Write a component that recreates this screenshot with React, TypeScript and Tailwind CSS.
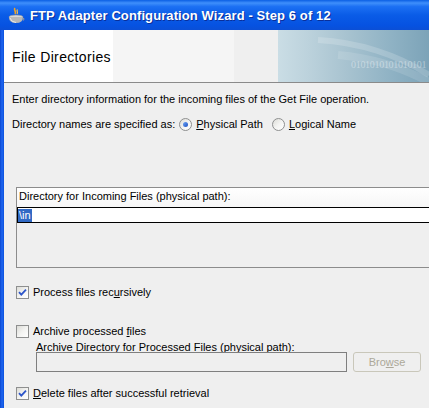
import React from "react";

const ui = { fontFamily: '"Liberation Sans", Arial, sans-serif' };

function JavaCup() {
  return (
    <svg width="18" height="18" viewBox="0 0 18 18">
      <path d="M8 1 C6 3 10 4 8 7" stroke="#f5a623" strokeWidth="1.6" fill="none" />
      <path d="M10.5 2.5 C9 4 11.5 5 10 7" stroke="#f8c24a" strokeWidth="1.2" fill="none" />
      <ellipse cx="9" cy="10" rx="7" ry="2" fill="#d8d8d8" stroke="#9a9a9a" strokeWidth="0.6" />
      <path d="M2 10 Q2 16 9 16 Q16 16 16 10 Z" fill="#b8b8b8" />
      <path d="M3 11 Q4 15 9 15.5" stroke="#e8e8e8" strokeWidth="1" fill="none" />
      <path d="M15.5 11 Q18 11 16.5 13.5" stroke="#9a9a9a" strokeWidth="1" fill="none" />
    </svg>
  );
}

function Checkbox({ checked }: { checked: boolean }) {
  return (
    <span className="relative inline-block h-[13px] w-[13px] shrink-0 border border-[#8e8f8f] bg-gradient-to-br from-[#dcdcd7] via-[#f3f3f1] to-white">
      {checked && (
        <svg className="absolute left-[1px] top-[1px]" width="9" height="9" viewBox="0 0 9 9">
          <path d="M1 4.2 L3.3 6.6 L8 1.6" stroke="#2d55c9" strokeWidth="1.8" fill="none" />
        </svg>
      )}
    </span>
  );
}

function Radio({ checked }: { checked: boolean }) {
  return (
    <span className="relative inline-flex h-[13px] w-[13px] shrink-0 items-center justify-center rounded-full border border-[#8e8f8f] bg-gradient-to-br from-[#dcdcd7] via-[#f3f3f1] to-white">
      {checked && <span className="h-[5px] w-[5px] rounded-full bg-gradient-to-br from-[#6ea4f5] to-[#1f4fc0]" />}
    </span>
  );
}

export default function App() {
  return (
    <div className="flex h-[408px] w-[429px] flex-col overflow-hidden bg-[#efefef] text-[11px] text-black" style={ui}>
      {/* Title bar */}
      <div className="flex h-[30px] shrink-0 items-center gap-[5px] bg-[linear-gradient(to_bottom,#0b5fe4_0%,#3f8ffb_10%,#1c70f3_22%,#0a5ce7_50%,#0652e1_85%,#0b4fd6_100%)] pl-[7px] pt-[1px]">
        <JavaCup />
        <span className="text-[13px] font-bold tracking-[0.1px] text-white [text-shadow:1px_1px_0_#0a2f99]">
          FTP Adapter Configuration Wizard - Step 6 of 12
        </span>
      </div>

      <div className="flex min-h-0 flex-1">
        {/* left window border */}
        <div className="w-[4px] shrink-0 bg-[linear-gradient(to_right,#0a46d0,#1f66f0,#0a50dc)]" />

        <div className="flex min-w-0 flex-1 flex-col">
          {/* Header */}
          <div className="flex h-[53px] shrink-0 border-b border-[#8a8a8a]">
            <div className="flex w-[109px] items-center bg-white pl-[8px] pt-[2px] text-[14px] tracking-[0.35px]">File Directories</div>
            <div className="w-[121px] bg-[#f5f5f5]" />
            <div className="w-[44px] bg-[#efefef]" />
            <div className="relative flex-1 overflow-hidden bg-[linear-gradient(to_right,#cadde5_0%,#bcd2dc_20%,#a8c3d0_45%,#8fb2c4_75%,#7ca3b8_100%)]">
              <svg className="absolute inset-0" width="151" height="52" viewBox="0 0 151 52">
                <path d="M40 10 C80 12 120 25 151 45" stroke="#ffffff" strokeOpacity="0.18" strokeWidth="6" fill="none" />
                <path d="M60 25 C95 28 125 38 151 52" stroke="#ffffff" strokeOpacity="0.12" strokeWidth="8" fill="none" />
              </svg>
              <span className="absolute left-[73px] top-[27px] font-['Liberation_Serif'] text-[10px] tracking-[-0.3px] text-white/40">
                0101010101010101
              </span>
            </div>
          </div>

          {/* Body */}
          <div className="flex flex-col">
            <div className="mt-[9px] pl-[8px] leading-[14px]">
              Enter directory information for the incoming files of the Get File operation.
            </div>
            <div className="mt-[11px] flex items-center pl-[8px] leading-[14px]">
              <span>Directory names are specified as:</span>
              <span className="ml-[4px] flex items-center gap-[4px]">
                <Radio checked />
                <span><u>P</u>hysical Path</span>
              </span>
              <span className="ml-[9px] flex items-center gap-[4px]">
                <Radio checked={false} />
                <span><u>L</u>ogical Name</span>
              </span>
            </div>

            {/* Incoming directory box */}
            <div className="ml-[12px] mt-[56px] flex h-[81px] w-[430px] flex-col border border-[#8c8c8c]">
              <div className="flex h-[19px] items-start bg-gradient-to-b from-white to-[#f6f6f6] pl-[2px] pt-[2px] leading-[13px]">
                Directory for Incoming Files (physical path):
              </div>
              <div className="flex h-[16px] items-center border border-black bg-white">
                <span className="bg-[#316ac5] px-[1px] leading-[13px] text-white">\in</span>
              </div>
            </div>

            <label className="ml-[12px] mt-[17px] flex items-center gap-[4px] leading-[14px]">
              <Checkbox checked />
              <span>Process files rec<u>u</u>rsively</span>
            </label>

            <label className="ml-[12px] mt-[25px] flex items-center gap-[4px] leading-[14px]">
              <Checkbox checked={false} />
              <span>Archive processed <u>f</u>iles</span>
            </label>
            <div className="ml-[32px] mt-[2px] leading-[14px]">
              Archi<u>v</u>e Directory for Processed Files (physical path):
            </div>
            <div className="ml-[32px] mt-[-2px] flex items-center gap-[6px]">
              <div className="h-[20px] w-[311px] border border-[#7f7f7f] bg-[#efefef]" />
              <div className="flex h-[20px] w-[68px] items-center justify-center rounded-[3px] border border-[#c9c7ba] text-[#aca899]">
                Bro<u>w</u>se
              </div>
            </div>

            <label className="ml-[12px] mt-[14px] flex items-center gap-[4px] leading-[14px]">
              <Checkbox checked />
              <span><u>D</u>elete files after successful retrieval</span>
            </label>
          </div>
        </div>
      </div>
    </div>
  );
}
